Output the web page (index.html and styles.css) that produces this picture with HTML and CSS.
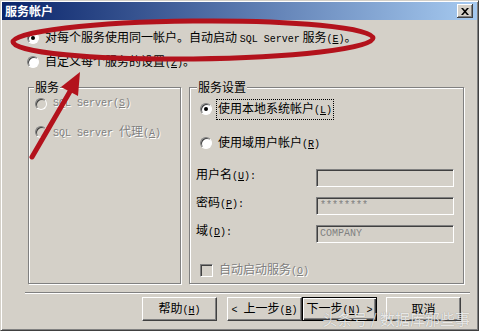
FILE: index.html
```html
<!DOCTYPE html>
<html lang="zh-CN">
<head>
  <meta charset="utf-8">
  <title>服务帐户</title>
  <link rel="stylesheet" href="styles.css">
</head>
<body>
  <div class="window">
    <div class="titlebar">
      <span class="title">服务帐户</span>
      <span class="close">
        <svg width="8" height="7" viewBox="0 0 8 7"><path d="M0 0h2l2 2.3L6 0h2L5 3.5 8 7H6L4 4.7 2 7H0l3-3.5z" fill="#000"/></svg>
      </span>
    </div>

    <div class="content">
      <div class="opt first"><span class="radio on"></span><span>对每个服务使用同一帐户。自动启动 <span class="en">SQL Server</span> 服务<span class="en">(<u>E</u>)</span>。</span></div>
      <div class="opt second"><span class="radio"></span><span>自定义每个服务的设置<span class="en">(<u>Z</u>)</span>。</span></div>

      <div class="groups">
        <fieldset class="group svc">
          <legend>服务</legend>
          <div class="opt off"><span class="radio"></span><span class="en">SQL Server(<u>S</u>)</span></div>
          <div class="opt off gap"><span class="radio"></span><span><span class="en">SQL Server </span>代理<span class="en">(<u>A</u>)</span></span></div>
        </fieldset>

        <fieldset class="group cfg">
          <legend>服务设置</legend>
          <div class="opt pick"><span class="radio on"></span><span class="focus">使用本地系统帐户<span class="en">(<u>L</u>)</span></span></div>
          <div class="opt pick gap2"><span class="radio"></span><span>使用域用户帐户<span class="en">(<u>R</u>)</span></span></div>

          <div class="fields">
            <div class="field"><span class="lbl">用户名<span class="en">(<u>U</u>):</span></span><span class="input"></span></div>
            <div class="field"><span class="lbl">密码<span class="en">(<u>P</u>):</span></span><span class="input">********</span></div>
            <div class="field"><span class="lbl">域<span class="en">(<u>D</u>):</span></span><span class="input">COMPANY</span></div>
          </div>

          <div class="opt off check-row"><span class="check"></span><span>自动启动服务<span class="en">(<u>O</u>)</span></span></div>
        </fieldset>
      </div>

      <div class="sep"></div>

      <div class="buttons">
        <button class="btn help">帮助<span class="en">(<u>H</u>)</span></button>
        <button class="btn"><span class="en">&lt; </span>上一步<span class="en">(<u>B</u>)</span></button>
        <button class="btn default">下一步<span class="en">(<u>N</u>) &gt;</span></button>
        <button class="btn cancel">取消</button>
      </div>
    </div>

    <!-- red marker drawn over the dialog -->
    <svg class="marks" viewBox="0 0 479 331" width="479" height="331">
      <ellipse cx="193" cy="40" rx="180" ry="19" fill="none" stroke="#b3121c" stroke-width="5" transform="rotate(-0.6 193 40)"/>
      <line x1="32" y1="157" x2="72" y2="88" stroke="#b3121c" stroke-width="5" stroke-linecap="round"/>
      <polygon points="80,72 61,87 78,96" fill="#b3121c"/>
    </svg>

    <div class="watermark">头条号 / 数据库那些事</div>
  </div>
</body>
</html>
```

FILE: styles.css
```css
*,*::before,*::after{box-sizing:border-box;}

:root{
  --face:#d4d0c8;
  --shadow:#808080;
  --dark:#404040;
  --light:#fff;
}

body{margin:0;background:var(--face);}

.window{
  position:relative;
  width:479px;height:331px;
  padding:1px;
  background:var(--face);
  border:1px solid;
  border-color:var(--face) var(--dark) var(--dark) var(--face);
  box-shadow:inset 1px 1px var(--light),inset -1px -1px var(--shadow);
  font:12px/16px "Noto Sans CJK SC",sans-serif;
  color:#000;
  overflow:hidden;
}

.en{font-family:"Liberation Mono",monospace;font-size:10px;}

/* === title bar === */
.titlebar{
  height:18px;
  display:flex;align-items:center;justify-content:space-between;
  padding:0 4px 0 3px;
  background:linear-gradient(90deg,#0a246a,#a6caf0);
  color:#fff;font-weight:bold;
}
.close{
  width:16px;height:14px;
  display:grid;place-items:center;
  background:var(--face);
  box-shadow:inset -1px -1px var(--dark),inset 1px 1px var(--light),inset -2px -2px var(--shadow);
}

/* === body === */
.content{padding:10px 0 0 25px;}

.opt{display:flex;align-items:center;gap:6px;height:16px;white-space:nowrap;}
.opt.second{margin-top:8px;}

.radio{
  position:relative;flex:none;
  width:12px;height:12px;border-radius:50%;
  border:1px solid;
  border-color:var(--shadow) var(--light) var(--light) var(--shadow);
  background:var(--light);
  box-shadow:inset 1px 1px var(--dark);
}
.radio.on::after{
  content:"";position:absolute;left:3px;top:3px;
  width:4px;height:4px;border-radius:50%;background:#000;
}

.off{color:var(--shadow);text-shadow:1px 1px var(--light);}
.off .radio,.off .check{background:var(--face);}

/* === group boxes === */
.groups{display:flex;gap:8px;margin:9px 0 0 1px;}
.group{
  margin:0;min-width:0;
  border:1px solid var(--shadow);
  box-shadow:inset 1px 1px var(--light),1px 1px var(--light);
}
.group legend{padding:0 1px;background:var(--face);}
.svc{width:153px;height:205px;padding:1px 6px 0;}
.svc legend{margin-left:-1px;}
.cfg{width:275px;height:205px;padding:6px 6px 0;}
.cfg legend{margin-left:1px;}

.svc .gap{margin-top:12px;}
.pick{margin-left:4px;}
.cfg .gap2{margin-top:18px;}
.focus{outline:1px dotted #000;outline-offset:0;padding:0 1px;margin-left:-1px;}

.fields{display:flex;flex-direction:column;gap:10px;margin-top:18px;}
.field{display:flex;align-items:flex-start;}
.lbl{width:120px;margin-top:-3px;}
.input{
  width:138px;height:18px;
  padding:1px 3px;
  border:1px solid;
  border-color:var(--shadow) var(--light) var(--light) var(--shadow);
  box-shadow:inset 1px 1px var(--dark),inset -1px -1px var(--face);
  background:var(--face);
  color:var(--shadow);
  font:10px/14px "Liberation Mono",monospace;
}

.check-row{margin:19px 0 0 4px;}
.check{
  flex:none;width:13px;height:13px;
  border:1px solid;
  border-color:var(--shadow) var(--light) var(--light) var(--shadow);
  box-shadow:inset 1px 1px var(--dark);
}

/* === separator + buttons === */
.sep{
  height:2px;margin:8px 7px 0 -2px;
  border-top:1px solid var(--shadow);
  border-bottom:1px solid var(--light);
}

.buttons{display:flex;justify-content:flex-end;padding-right:16px;margin-top:3px;}
.btn{
  width:75px;height:24px;padding:0;
  font:12px/16px "Noto Sans CJK SC",sans-serif;color:#000;
  background:var(--face);
  border:1px solid;
  border-color:var(--light) var(--dark) var(--dark) var(--light);
  box-shadow:inset -1px -1px var(--shadow);
}
.btn.help{margin-right:10px;}
.btn.default{border-color:#000;box-shadow:inset 1px 1px var(--light),inset -1px -1px var(--dark),inset -2px -2px var(--shadow);}
.btn.cancel{margin-left:9px;}

/* === overlays === */
.marks{position:absolute;left:-1px;top:-1px;pointer-events:none;}
.watermark{
  position:absolute;right:8px;bottom:1px;
  font-size:15px;line-height:20px;
  color:rgba(255,255,255,.8);
  text-shadow:0 0 1px rgba(0,0,0,.35);
}
```
